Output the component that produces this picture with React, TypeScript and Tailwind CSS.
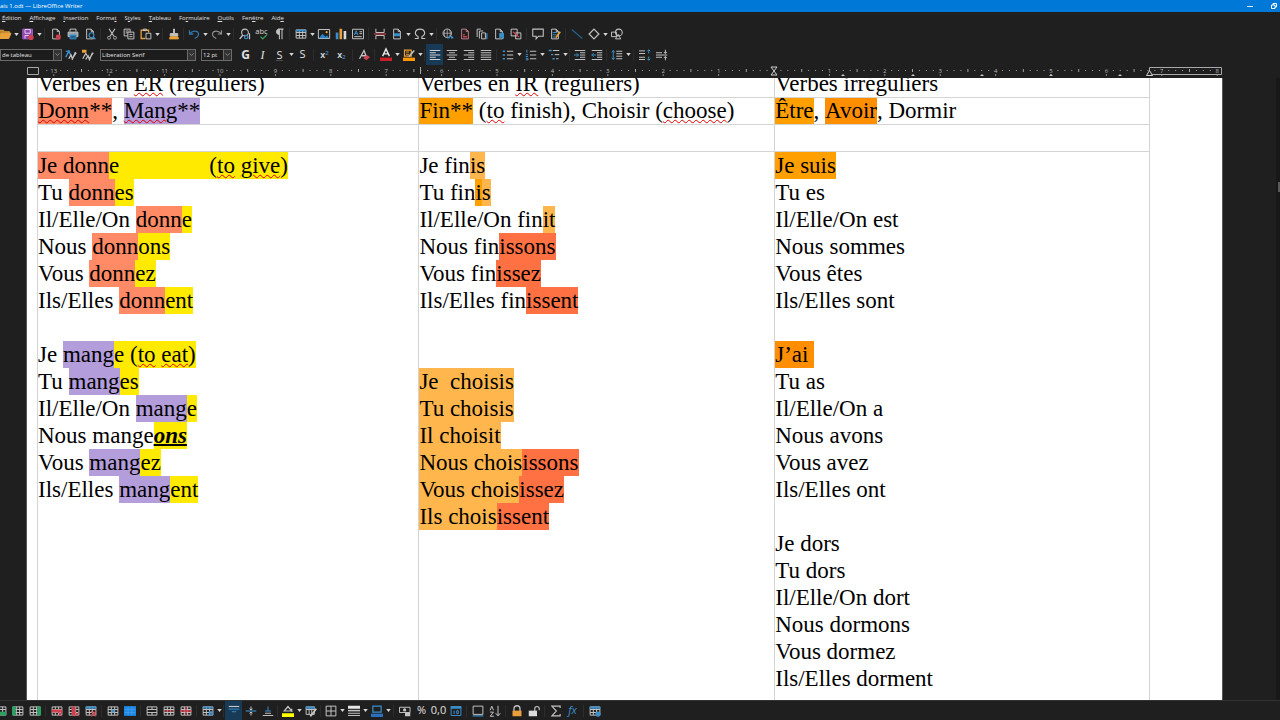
import type { ReactNode } from "react";

const G = "#c4c4c4";
const B = "#3b8fc9";
const R = "#d0414f";
const O = "#e9a13b";

const grid = "M1.5 2.5h13v11h-13zM1.5 6h13M1.5 10h13M5.8 2.5v11M10.2 2.5v11";
const page = "M3.5 1.5h6l3 3v10h-9zM9.5 1.5v3h3";

function P({ d, c = G, f = "none", w = 1.3 }: { d: string; c?: string; f?: string; w?: number }) {
  return <path d={d} stroke={c} fill={f} strokeWidth={w} />;
}

const icons: Record<string, ReactNode> = {
  open: <><P d="M0 14V3h6l2 2h6v3" c={O} f="#b9822f" /><P d="M0 14l3-7h13l-3 7z" c={O} f={O} /></>,
  save: <><P d="M1 1.5h13v13H1z" c="#a45cc0" f="#8d44ad" /><P d="M4 2h7v5H4z" c="#e4d0ec" f="#8d44ad" /><P d="M4 14v-4h5" c="#e4d0ec" /><circle cx="12" cy="12.5" r="3.5" fill={R} /></>,
  pdf: <><P d={page} /><P d="M8.5 9.500h5v5h-5z" c={R} f={R} /></>,
  print: <><P d="M4 5V1.5h8V5" /><P d="M1.5 5.5h13v6h-13z" c={G} f="#8fa3b0" /><P d="M4 9.5h8v5H4z" c={B} f="#23618c" /></>,
  preview: <><P d={page} /><circle cx="10" cy="9.5" r="3.2" stroke={B} strokeWidth="1.5" fill="#1f1f1f" /><P d="M12.3 12l3 3" c={B} w={1.8} /></>,
  cut: <><P d="M4 1l6.5 10M12 1L5.5 11" w={1.5} /><circle cx="4" cy="13" r="2" stroke={G} fill="none" /><circle cx="12" cy="13" r="2" stroke={G} fill="none" /></>,
  copy: <><P d="M1.5 1.5h8v9h-8zM3.5 4h4M3.5 6.5h3" /><P d="M6.5 5.5h8v9h-8zM8.5 8.5h4M8.5 11.5h4" f="#1f1f1f" /></>,
  paste: <><P d="M7 14H1.5V3h10v3" c={O} w={1.7} /><P d="M4.5 1.5h4v2h-4z" /><P d="M8 7h6.5v7.5H8z" /></>,
  brush: <><P d="M8 1v6" w={2.5} /><P d="M3 7.5h10v3H3z" f={G} /><P d="M3 11.5h10l1 3H2z" c={O} f={O} /></>,
  undo: <P d="M2 3v5h5M2.5 7.5C6 3 13 3 14 7.5c.5 3-2 5-5 6.5" c="#2e76a8" w={1.7} />,
  redo: <P d="M14 3v5H9M13.5 7.5C10 3 3 3 2 7.5c-.5 3 2 5 5 6.500" c="#8f8f8f" w={1.5} />,
  search: <><circle cx="8" cy="6" r="4.5" stroke={G} strokeWidth="1.4" fill="none" /><P d="M5 9.5L1 14.5" w={2} /><circle cx="9.5" cy="12" r="2.3" stroke={B} strokeWidth="1.5" fill="none" /><P d="M14 7v8" w={1.6} /></>,
  spell: <><text x="-1" y="8" fontSize="10" fill="#dadada" fontFamily="Open Sans, sans-serif">abc</text><P d="M6 11.5l3 3 6-6" c="#3ba55d" w={1.7} /></>,
  pilcrow: <><P d="M8.5 15V1.5M12 15V1.5M14 1.5H7" w={1.4} /><path d="M8 1.5a3.500 3.500 0 000 7z" fill={G} stroke={G} /></>,
  table: <><P d={grid} /><P d="M1 3.5h14" c={B} w={2.5} /></>,
  image: <><P d="M.5 2h15v12H.5z" /><path d="M1 13.5l5-6 4 4 2-2 3 4z" fill="#2783c4" /><circle cx="11.500" cy="5.5" r="1.5" fill={O} /></>,
  chart: <><path d="M1 6h3.500v9H1z" fill={B} /><path d="M6 1h3.500v14H6z" fill={O} /><path d="M11.5 4H15v11h-3.500z" fill="#d9d9d9" /></>,
  textbox: <><P d="M.7 1.7h14.6v12.600H.7zM10 5h3.500M10 7.5h3.500M3 11.5h10" /><P d="M3 9.5l2.500-6 2.500 6M4 7.5h3" c={B} /></>,
  pagebreak: <><P d="M2.5 1v5h11V1M2.5 15v-5h11v5" /><P d="M0 8h16" c={R} w={1.5} /></>,
  field: <><P d={page} /><path d="M4 7h8v4H4z" fill={B} /></>,
  omega: <P d="M1 14h4.500v-2.500C-1 8 2 1.5 8 1.5s9 6.500 2.500 10V14H15" w={1.5} />,
  globe: <><circle cx="7" cy="7" r="5.7" stroke={G} strokeWidth="1.2" fill="none" /><P d="M1.5 7h11M7 1.5v11M4 2.5c-1.500 3-1.500 6 0 9M10 2.5c1.500 3 1.500 6 0 9" w={0.9} /><P d="M7 13h3M12 13h3M9 11.500h5" c={B} w={1.8} /></>,
  footnote: <><P d={page} c="#bf8088" /><P d="M5.5 11.5h5M5.5 9h2" c={R} w={2} /></>,
  endnote: <><P d="M1.5 12V1.5h5M4.5 14V4h5" /><P d="M7.5 6.5h5v8h-5z" /><P d="M14.500 7v8" c={B} w={1.6} /></>,
  bookmark: <><P d={page} /><P d="M9 7h5v7l-2.500-2L9 14z" c={B} f={B} /></>,
  crossref: <><P d="M1.5 1.5h8v9h-8z" /><P d="M7.5 6.5h7v8h-7z" /><P d="M4 5l8 7" c={R} w={1.6} /></>,
  comment: <P d="M1 1.5h14v9.500H8.500l-3 3.500V11H1z" w={1.4} />,
  track: <><P d={page} /><P d="M5 6h6M5 9h5M5 12h3" c={B} /><P d="M15 5l-6 8" c={O} w={2.2} /></>,
  line: <P d="M1 2l14 12" c="#27638e" w={1.5} />,
  diamond: <P d="M8 1.5L14.5 8 8 14.5 1.5 8z" w={1.6} />,
  shapes: <><circle cx="10.500" cy="6" r="4.500" stroke={G} strokeWidth="1.4" fill="none" /><P d="M.7 5.5h6.500v6H.7z" /><P d="M6 14.5l3.500-6 3.500 6z" /></>,
  style: <><P d="M1 11l4-8 3 6" c={B} w={2} /><P d="M1 3h6" c={B} w={1.6} /><P d="M5 13l3-5 2 5 4-9M9 14l6-9" w={1.8} /></>,
  styleNew: <><P d="M1 13l4-7 2 3" w={1.6} /><path d="M0 1h6v4H0z" fill={O} /><P d="M5 14l3-5 2 5 4-9M9 14l6-9" w={1.8} /></>,
  clear: <><P d="M2 13L8 2l3 8M5 9h5" w={1.7} /><path d="M7 12l5-4 4 3-5 4z" fill={R} /></>,
  color: <><P d="M3.5 9.5L8 0l4.500 9.500M5 6.5h6" w={1.9} c="#e8e8e8" /><path d="M0 11.500h16V16H0z" fill="#cc1f26" /></>,
  mark: <><P d="M2 1.5h9v8H2zM4 4h4M4 7h4" c={O} w={1.6} /><P d="M15 2L8 10" w={2} /><path d="M0 11.500h16V16H0z" fill="#ff9800" /></>,
  left: <P d="M1 2h14M1 5h8M1 8h14M1 11h8M1 14h14" c="#d8d8d8" />,
  center: <P d="M1 2h14M4 5h8M1 8h14M4 11h8M2 14h12" />,
  right: <P d="M1 2h14M7 5h8M1 8h14M7 11h8M1 14h14" />,
  justify: <P d="M1 2h14M1 5h14M1 8h14M1 11h14M1 14h14" />,
  bullets: <><P d="M1 3h3M1 8h3M1 13h3" c={B} w={2.3} /><P d="M6.5 3H15M6.5 8H15M6.5 13H15" /></>,
  numbers: <><P d="M2.5 1v4M1 7.5h3M1 10h3M1 12.5h3v2H1" c={B} /><P d="M6.5 3H15M6.5 8H15M6.5 13H15" /></>,
  outline: <><P d="M1 2h4M4 7.5h3M6 13h3" c={B} w={1.8} /><P d="M6.5 2H15M9 7.5h6M11 13h3" /></>,
  indent: <><P d="M1 2h14M8 5h7M8 8h7M8 11h7M1 14h14" /><P d="M0 8h6M3.5 5.5L6 8l-2.500 2.500" c={B} /></>,
  outdent: <><P d="M1 2h14M8 5h7M8 8h7M8 11h7M1 14h14" /><P d="M7 8H1M3.5 5.5L1 8l2.500 2.500" c={B} /></>,
  spacing: <><P d="M3 2v12M1 4.5L3 2l2 2.500M1 11.5L3 14l2-2.500" c={B} /><P d="M7 3h8M7 6.3h8M7 9.6h8M7 13h8" /></>,
  paraUp: <><P d="M0 2.5h8M0 6h8M0 11h8M0 14h8" /><P d="M13 1v5M11 3l2-2 2 2M13 15v-5M11 13l2 2 2-2" c={B} /></>,
  paraDown: <><P d="M0 5h8M0 8h15M0 11h8" /><P d="M12.5 1v5M10.5 4l2 2 2-2M12.5 15v-5M10.5 12l2-2 2 2" /></>,
  rowIns: <><P d={grid} /><path d="M1 9h14v5H1z" fill="#2f9e62" /></>,
  colBefore: <><P d={grid} /><path d="M0 2h5v12H0z" fill="#2f9e62" /></>,
  colAfter: <><P d={grid} /><path d="M11 2h5v12h-5z" fill="#2f9e62" /></>,
  rowDel: <><P d={grid} /><path d="M1 6h14v4H1z" fill={R} /><P d="M9 9l6 6M15 9l-6 6" c={R} /></>,
  colDel: <><P d={grid} /><path d="M5 2h5v12H5z" fill={R} /><P d="M9 9l6 6M15 9l-6 6" c={R} /></>,
  tblDel: <><P d={grid} /><path d="M1 2h14v3H1z" fill={B} /><P d="M8 8l7 7M15 8l-7 7" c={R} w={1.6} /></>,
  selCell: <><P d={grid} /><path d="M6 6h4v4H6z" fill={B} /></>,
  selTbl: <><path d="M0 1.5h16v13H0z" fill="#1e88e5" /><P d="M1 6h14M1 10h14M5.5 2v12M10.5 2v12" c="#5aaaf0" w={0.6} /></>,
  merge: <P d="M1.5 2.5h13v11h-13zM1.5 6h13M1.5 10h13M8 2.5V6M8 10v3.500" />,
  split: <><P d={grid} /><P d="M2 8h12" c={R} w={1.6} /></>,
  splitTbl: <><P d={grid} /><P d="M0 8h16M8 2v12" c={R} w={1.8} /></>,
  optimize: <><P d={grid} /><path d="M1 2h14v3H1zM9 8h6v6H9z" fill={B} opacity=".8" /></>,
  vTop: <><P d="M1 2h14" w={1.6} /><P d="M1 5.5h14M5 9h6" c={B} /></>,
  vMid: <><P d="M1 8h14" c={B} w={1.5} /><P d="M8 2v4M8 10v4M6 5l2 1.500L10 5M6 11l2-1.500 2 1.500" /></>,
  vBot: <><P d="M1 14h14M4 11h8" /><P d="M8 2v6M4 8h8" c={B} /></>,
  fill: <><P d="M3 8l5-6 5 6H3zM13 5v4" w={1.6} /><path d="M0 11h16v5H0z" fill="#ffff00" /></>,
  autofmt: <><P d="M1.5 2.5h11v10h-11zM1.5 6h11M5.500 2.5v10M9 2.5v10" /><path d="M1 2h12v3H1z" fill={B} /><P d="M15 5l-6 8-2 2" w={2.5} /></>,
  borders: <P d="M1.5 1.5h13v13h-13zM1.5 8h13M8 1.5v13" />,
  lineStyle: <><path d="M0 1h16v4H0z" fill="#e6e6e6" /><P d="M0 7.5h16" w={2} /><P d="M0 11h16M0 14h16" /></>,
  lineColor: <><P d="M2.5 1.5h11v8h-11z" c={B} w={1.6} /><path d="M0 11.500h16V16H0z" fill="#2a6fc0" /></>,
  money: <><P d="M.7 3h14v7H.7z" /><circle cx="7.5" cy="6.5" r="2.2" fill={G} /><path d="M8 10h7v5H8z" fill={G} /></>,
  calendar: <><P d="M1.5 2h13v12h-13z" c={B} /><path d="M1 1.5h14v3.500H1z" fill={B} /><P d="M5.5 7.5V12M9 7.5h2v4H9z" c={B} /></>,
  frame: <><P d="M1.5 1.5h13v11h-13z" /><P d="M1 14.5h14" c={B} w={1.6} /></>,
  sort: <P d="M1.5 7L3.7 1.5 6 7M1.5 9.5H6L1.5 15h5M12 1v13M9 11l3 3.500 3-3.500" />,
  lock: <><P d="M4 8V5a4 4 0 018 0v3" w={1.7} /><path d="M2 7.5h12V15H2z" fill={O} /></>,
  unlock: <><P d="M9 8V5a3 3 0 016 0v2" w={1.5} /><path d="M1 7.5h11V15H1z" fill="#dcdcdc" /></>,
  sigma: <P d="M13.5 4V1.5h-11L8.500 8l-6 6.500h11V12" w={1.5} />,
  tblProps: <><P d={grid} /><path d="M1 2h14v3H1z" fill={B} /><circle cx="12" cy="12" r="3.5" fill={B} /></>,
};

const letters: Record<string, ReactNode> = {
  bold: <b className="text-xs">G</b>,
  italic: <i className="font-['Liberation_Serif',serif] text-xs">I</i>,
  underline: <span className="border-b border-[#4a4a4a] leading-none">S</span>,
  strike: <span>S</span>,
  sup: <span className="text-[9px] font-semibold">x<sup className="text-[6px] text-[#3b8fc9]">2</sup></span>,
  sub: <span className="text-[9px] font-semibold">x<sub className="text-[6px] text-[#3b8fc9]">2</sub></span>,
  percent: <span>%</span>,
  decimal: <span>0,0</span>,
  fx: <i className="text-[#3b8fc9]">fx</i>,
};

// "v" = drop-down arrow, "|" = separator, ":" = narrow gap
function Tools({ items, active }: { items: string; active?: string }) {
  return (
    <>
      {items.split(" ").map((name, i) => {
        if (name === "v")
          return (
            <button key={i} aria-label="Options" className="flex w-[6px] shrink-0 items-center justify-center">
              <svg viewBox="0 0 6 4" className="h-[3px] w-[5px]"><path d="M0 0h6L3 4z" fill="#d8d8d8" /></svg>
            </button>
          );
        if (name === "|") return <span key={i} className="mx-[2px] h-3 w-px shrink-0 bg-[#2d2d2d]" />;
        if (name === ":") return <span key={i} className="mx-px h-3 w-px shrink-0 bg-[#2d2d2d]" />;
        return (
          <button
            key={i}
            aria-label={name}
            className={`flex h-full w-[17px] shrink-0 items-center justify-center text-[11px] text-[#e0e0e0] ${name === active ? "bg-[#173a57]" : ""}`}
          >
            {letters[name] ?? <svg viewBox="0 0 16 16" className="h-3 w-3 overflow-visible">{icons[name]}</svg>}
          </button>
        );
      })}
    </>
  );
}

function Combo({ value, label, className }: { value: string; label: string; className: string }) {
  return (
    <label className={`relative flex h-3 shrink-0 ${className}`}>
      <select aria-label={label} className="w-full appearance-none border border-[#6b6b6b] bg-[#1c1c1c] pl-px text-[6px] leading-[10px] text-[#e6e6e6]">
        <option>{value}</option>
      </select>
      <span className="pointer-events-none absolute inset-y-0 right-0 flex w-[9px] items-center justify-center border border-[#6b6b6b] bg-[#333]">
        <svg viewBox="0 0 8 5" className="h-[3px] w-[5px]"><path d="M.5.5L4 4 7.5.5" fill="none" stroke="#bbb" /></svg>
      </span>
    </label>
  );
}

const INCH = 55.4;
const ZERO = 747;

function Ruler() {
  const ticks = [];
  for (let n = -108; n <= 64; n++) {
    const x = ZERO + (n * INCH) / 8;
    if (x < 14 || n === 0) continue;
    if (n % 8 === 0)
      ticks.push(
        <g key={n}>
          <text x={x} y="8" textAnchor="middle" fontSize="6" fill="#b5b5b5">{Math.abs(n / 8)}</text>
          <path d={`M${x} 9v2`} stroke="#8a8a8a" />
        </g>
      );
    else ticks.push(<path key={n} d={n % 4 === 0 ? `M${x} 4v3` : `M${x} 5v1`} stroke="#a0a0a0" />);
  }
  return (
    <div className="ml-[27px] h-[13px] shrink-0 overflow-hidden font-['Open_Sans',sans-serif]">
      <svg width="1196" height="13" className="block">
        {ticks}
        <path d="M.5 2.5h11v7H.5zM1122.5 2.5h72v7h-72zM393.5 2v7" fill="none" stroke="#a8a8a8" />
        <path d="M744 2h6l-6 8h6zM1119.5 10.5l3-5 3 5z" fill="#1f1f1f" stroke="#d0d0d0" />
        {[816, 886, 955, 1024, 1093].map((x) => <path key={x} d={`M${x - 2} 11l2-2 2 2z`} fill="#c8c8c8" />)}
      </svg>
    </div>
  );
}

const marks: Record<string, string> = {
  salmon: "bg-[#ff8a65]",
  purple: "bg-[#b39ddb]",
  yellow: "bg-[#ffea00]",
  amber: "bg-[#ffa000]",
  orange: "bg-[#ff8f00]",
  light: "bg-[#ffb74d]",
  deep: "bg-[#ff7043]",
};

function M({ c, children }: { c: string; children: ReactNode }) {
  return <mark className={`inline-block text-black ${marks[c]}`}>{children}</mark>;
}

// misspelled word
function W({ children }: { children: ReactNode }) {
  return <span className="underline decoration-[#e00000] decoration-wavy decoration-1 underline-offset-1">{children}</span>;
}

function Lines({ children }: { children: ReactNode[] }) {
  return <>{children.map((line, i) => <p key={i} className="h-[27px]">{line}</p>)}</>;
}

const erLines = [
  <span className="flex">
    <M c="salmon">Je donn</M>
    <mark className="flex w-[179px] justify-between bg-[#ffea00] text-black"><span>e</span><span>(<W>to</W> <W>give</W>)</span></mark>
  </span>,
  <>Tu <M c="salmon">donn</M><M c="yellow">es</M></>,
  <>Il/Elle/On <M c="salmon">donn</M><M c="yellow">e</M></>,
  <>Nous <M c="salmon">donn</M><M c="yellow">ons</M></>,
  <>Vous <M c="salmon">donn</M><M c="yellow">ez</M></>,
  <>Ils/Elles <M c="salmon">donn</M><M c="yellow">ent</M></>,
  "",
  <>Je <M c="purple">mang</M><M c="yellow">e (<W>to</W> <W>eat</W>)</M></>,
  <>Tu <M c="purple">mang</M><M c="yellow">es</M></>,
  <>Il/Elle/On <M c="purple">mang</M><M c="yellow">e</M></>,
  <>Nous mange<M c="yellow"><b className="italic underline decoration-2">ons</b></M></>,
  <>Vous <M c="purple">mang</M><M c="yellow">ez</M></>,
  <>Ils/Elles <M c="purple">mang</M><M c="yellow">ent</M></>,
];

const irLines = [
  <>Je fin<M c="light">is</M></>,
  <>Tu fin<M c="amber">i</M><M c="light">s</M></>,
  <>Il/Elle/On fin<M c="light">it</M></>,
  <>Nous fin<M c="deep">issons</M></>,
  <>Vous fin<M c="deep">issez</M></>,
  <>Ils/Elles fin<M c="deep">issent</M></>,
  "",
  "",
  <M c="light">Je  choisis</M>,
  <M c="light">Tu choisis</M>,
  <M c="light">Il choisit</M>,
  <><M c="light">Nous chois</M><M c="deep">issons</M></>,
  <><M c="light">Vous chois</M><M c="deep">issez</M></>,
  <><M c="light">Ils chois</M><M c="deep">issent</M></>,
];

const irregularLines = [
  <M c="amber">Je suis</M>,
  "Tu es", "Il/Elle/On est", "Nous sommes", "Vous êtes", "Ils/Elles sont", "",
  <M c="orange">{"J’ai "}</M>,
  "Tu as", "Il/Elle/On a", "Nous avons", "Vous avez", "Ils/Elles ont", "",
  "Je dors", "Tu dors", "Il/Elle/On dort", "Nous dormons", "Vous dormez", "Ils/Elles dorment",
];

const menus = ["Édition", "Affichage", "Insertion", "Format", "Styles", "Tableau", "Formulaire", "Outils", "Fenêtre", "Aide"];
const accel = [0, 0, 0, 5, 1, 0, 2, 0, 3, 3];

export default function App() {
  return (
    <div className="flex h-screen flex-col overflow-hidden bg-[#1f1f1f] font-['Open_Sans',sans-serif] text-[#e0e0e0]">
      <header className="flex h-3 shrink-0 items-center justify-between bg-[#0078d7] text-[6px] leading-3 text-white">
        <h1>ais 1.odt — LibreOffice Writer</h1>
        <div className="flex items-center gap-[18px]">
          <button aria-label="Réduire"><svg width="6" height="6" className="block"><path d="M0 3.5h6" stroke="#d5e8f8" /></svg></button>
          <button aria-label="Restaurer" className="mr-[3px]">
            <svg width="6" height="6" className="block"><path d="M.5 2h3.500v3.500H.5zM2 2V.5h3.500V4H4" fill="none" stroke="#fff" /></svg>
          </button>
        </div>
      </header>

      <nav className="flex h-3 shrink-0 items-center gap-2 pl-[2px] text-[6px] leading-3">
        {menus.map((m, i) => (
          <button key={m}>
            {m.slice(0, accel[i])}<span className="underline underline-offset-1">{m[accel[i]]}</span>{m.slice(accel[i] + 1)}
          </button>
        ))}
      </nav>

      <div role="toolbar" className="-ml-1 flex h-5 shrink-0 items-center">
        <Tools items="open v save v | pdf print preview | cut copy paste v | brush : undo v redo v | search spell pilcrow | table v image chart textbox | pagebreak field v omega v | globe footnote endnote bookmark crossref | comment track | line diamond v shapes" />
      </div>

      <div role="toolbar" className="flex h-[21px] shrink-0 items-center">
        <Combo label="Style" value="de tableau" className="w-[62px]" />
        <Tools items="style styleNew" />
        <Combo label="Police" value="Liberation Serif" className="ml-1 w-24" />
        <Combo label="Taille" value="12 pt" className="mr-[5px] ml-[5px] w-[31px]" />
        <Tools
          active="left"
          items="bold italic underline v strike | sup sub | clear | color v mark v : left center right justify | bullets v numbers v outline v : indent outdent : spacing v | paraUp paraDown"
        />
      </div>

      <Ruler />

      <div className="flex min-h-0 flex-1 justify-between">
        <main className="mr-[53px] ml-[26px] flex-1 overflow-hidden border-r border-l border-[#555] bg-white pr-[72px] pl-[10px]">
          <table className="-mt-2 h-[800px] w-full table-fixed border-collapse border-x border-[#d4d4d4] font-['Liberation_Serif',serif] text-[23px] leading-[26px] whitespace-pre text-black [&_td]:border [&_td]:border-[#d4d4d4] [&_td]:p-0 [&_td]:align-top">
            <colgroup>
              <col className="w-[34.3%]" />
              <col className="w-[32%]" />
              <col />
            </colgroup>
            <tbody>
              <tr className="h-[27px]">
                <td>Verbes en <W>ER</W> (réguliers)</td>
                <td>Verbes en <W>IR</W> (réguliers)</td>
                <td>Verbes irréguliers</td>
              </tr>
              <tr className="h-[27px]">
                <td><M c="salmon"><W>Donn</W>**</M>, <M c="purple"><W>Mang</W>**</M></td>
                <td><M c="amber">Fin**</M> (<W>to</W> finish), Choisir (<W>choose</W>)</td>
                <td><M c="amber">Être</M>, <M c="orange">Avoir</M>, Dormir</td>
              </tr>
              <tr className="h-[27px]"><td /><td /><td /></tr>
              <tr className="leading-[27px]">
                <td><Lines>{erLines}</Lines></td>
                <td><Lines>{irLines}</Lines></td>
                <td><Lines>{irregularLines}</Lines></td>
              </tr>
            </tbody>
          </table>
        </main>
        <div className="flex w-1 flex-col items-end bg-[#181818]">
          <div className="mt-[104px] h-[10px] w-[2px] bg-[#5a5a5a]" />
        </div>
      </div>

      <div role="toolbar" className="-ml-2 flex h-5 shrink-0 items-center border-t border-[#333]">
        <Tools
          active="vTop"
          items="rowIns colBefore colAfter | rowDel colDel tblDel | selCell selTbl | merge split splitTbl | optimize v : vTop vMid vBot : fill v autofmt : borders v lineStyle v lineColor v | money percent decimal calendar | frame sort | lock unlock | sigma fx | tblProps"
        />
      </div>
    </div>
  );
}
